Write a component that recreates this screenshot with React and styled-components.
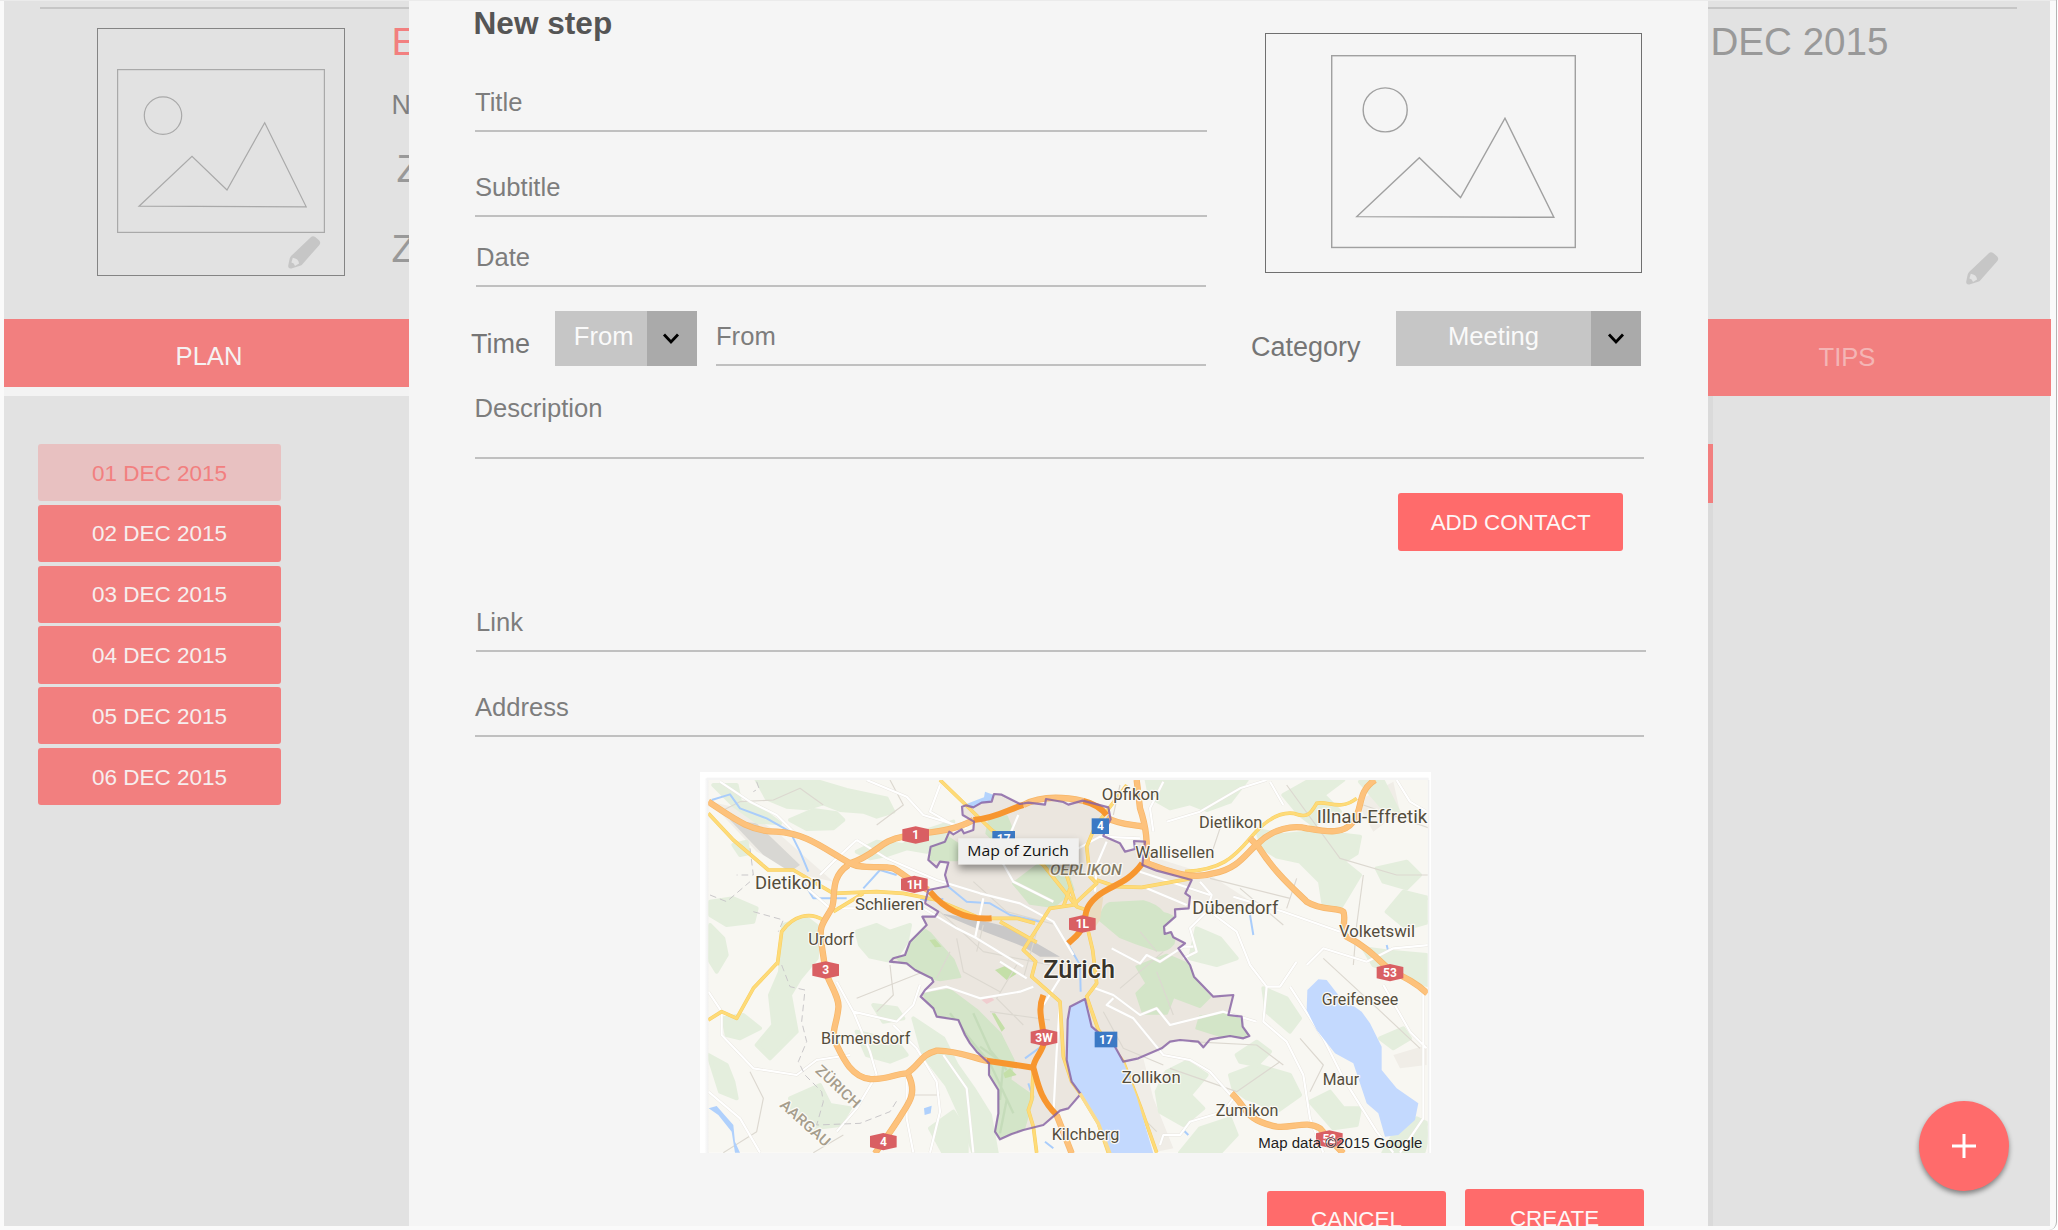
import React from "react";
import styled, { createGlobalStyle, css } from "styled-components";

const coral = "#ff6b6b";
const coralMuted = "#f27f7f";
const shade = "#e2e2e2";

const GlobalStyle = createGlobalStyle`
  *, *::before, *::after { box-sizing: border-box; }
  body {
    margin: 0;
    background: #ffffff;
    font-family: "Liberation Sans", Arial, Helvetica, sans-serif;
  }
`;

const Window = styled.div`
  position: relative;
  width: 2057px;
  height: 1230px;
  padding: 1px 0 4px 4px;
  overflow: hidden;
  background: #fafafa;
  border-right: 1px solid #b4b4b4;
  border-bottom-right-radius: 8px;
  box-shadow: inset 0 1px 0 #ebebeb;
`;

const Columns = styled.div`
  display: flex;
  height: 1225px;
  overflow: hidden;
`;

const Side = styled.div`
  display: flex;
  flex-direction: column;
  flex: none;
  width: ${(p) => p.$width}px;
  overflow: hidden;
`;

const Header = styled.header`
  flex: none;
  height: 318px;
  width: ${(p) => p.$width || "auto"};
  background: ${shade};
  overflow: hidden;
`;

const Rule = styled.div`
  height: 2px;
  margin: 6px ${(p) => p.$right || 0}px 0 ${(p) => p.$left || 0}px;
  background: #c6c6c6;
`;

const HeaderRow = styled.div`
  display: flex;
  align-items: flex-start;
  padding-left: 93px;
`;

const PictureBox = styled.div`
  position: relative;
  display: flex;
  flex: none;
  align-items: center;
  justify-content: center;
  width: ${(p) => p.$w}px;
  height: ${(p) => p.$h}px;
  margin: ${(p) => p.$margin};
  padding-bottom: 2px;
  border: 1.5px solid ${(p) => p.$color};
`;

const PencilBadge = styled.div`
  position: absolute;
  right: 23.5px;
  bottom: 6.5px;
  line-height: 0;
`;

const HeaderText = styled.div`
  width: 60px;
  margin-left: 46.5px;
  padding-top: 11px;
`;

const BigLine = styled.div`
  font-size: ${(p) => p.$size || 39}px;
  line-height: 44px;
  white-space: nowrap;
  margin-top: ${(p) => p.$top || 0}px;
  padding-left: ${(p) => p.$left || 0}px;
  color: ${(p) => p.$color || "#999999"};
`;

const SmallLine = styled.div`
  font-size: 26.8px;
  line-height: 30px;
  margin-top: 26px;
  color: #808080;
`;

const Tab = styled.div`
  flex: none;
  display: flex;
  align-items: center;
  justify-content: center;
  height: ${(p) => p.$height}px;
  padding: ${(p) => p.$pad};
  background: ${coralMuted};
  color: ${(p) => (p.$active ? "#f5f2f2" : "#f4b5b5")};
  font-size: 25.6px;
`;

const Strip = styled.div`
  flex: none;
  height: 9.5px;
  background: #f3f3f3;
`;

const Days = styled.nav`
  flex: 1;
  display: flex;
  flex-direction: column;
  gap: 3.5px;
  padding: 48px 0 0 34px;
  background: ${shade};
`;

const Day = styled.div`
  display: flex;
  flex: none;
  align-items: center;
  justify-content: center;
  width: 243px;
  height: 57.3px;
  padding-top: 2px;
  border-radius: 3px;
  font-size: 22.5px;
  background: ${(p) => (p.$current ? "#e8c1c1" : coralMuted)};
  color: ${(p) => (p.$current ? coralMuted : "#f6eeee")};
`;

const Dialog = styled.main`
  flex: none;
  width: 1299px;
  padding: 0 62px;
  background: #f5f5f5;
`;

const TopGrid = styled.div`
  display: grid;
  grid-template-columns: 736px 395px;
  column-gap: 44px;
`;

const DialogTitle = styled.h1`
  margin: 4px 0 0 2.5px;
  font-size: 31.6px;
  line-height: 36px;
  font-weight: 700;
  color: #555555;
`;

const Field = styled.div`
  margin: ${(p) => p.$top}px ${(p) => p.$right || 0}px 0 ${(p) => p.$left}px;
  padding-bottom: ${(p) => p.$room || 13}px;
  border-bottom: 2px solid #c0c0c0;
  font-size: 25.6px;
  line-height: 30px;
  color: #7d7d7d;
  text-indent: ${(p) => p.$indent || 0}px;
`;

const ControlRow = styled.div`
  display: flex;
  height: 55px;
  margin-top: ${(p) => p.$top}px;
`;

const ControlLabel = styled.div`
  width: ${(p) => p.$width}px;
  padding-top: ${(p) => p.$pad}px;
  font-size: 27px;
  line-height: 30px;
  color: #757575;
`;

const Select = styled.div`
  display: flex;
  flex: none;
  height: 55px;
`;

const SelectValue = styled.div`
  width: ${(p) => p.$width}px;
  padding: 10px 0 0 ${(p) => p.$left || 0}px;
  text-align: center;
  background: #c6c6c6;
  color: #fafafa;
  font-size: 25.6px;
  line-height: 30px;
`;

const SelectArrow = styled.div`
  display: flex;
  align-items: center;
  justify-content: center;
  width: 50px;
  padding-right: 1px;
  background: #aaaaaa;
`;

const InlineField = styled.div`
  flex: 1;
  margin: 0 1px 0 19.3px;
  padding-top: 10px;
  border-bottom: 2px solid #c0c0c0;
  font-size: 25.6px;
  line-height: 30px;
  color: #7d7d7d;
`;

const buttonText = css`
  font-size: 22.4px;
  color: #fdf6f6;
`;

const Button = styled.div`
  display: flex;
  flex: none;
  align-items: center;
  justify-content: center;
  width: ${(p) => p.$width}px;
  height: 58px;
  margin-top: ${(p) => p.$top || 0}px;
  padding-top: ${(p) => p.$pad || 0}px;
  border-radius: 3px;
  background: ${coral};
  ${buttonText}
`;

const ButtonRow = styled.div`
  display: flex;
  justify-content: flex-end;
  gap: ${(p) => p.$gap || 0}px;
  padding: ${(p) => p.$top}px ${(p) => p.$right}px 0 0;
`;

const MapFrame = styled.figure`
  width: 731px;
  height: 380.5px;
  margin: 35px 0 0 229px;
  background: #ffffff;
  svg { display: block; }
`;

const RightBody = styled.div`
  flex: 1;
  width: 342px;
  padding-top: 48px;
  background: linear-gradient(90deg, #dadada 0 5px, ${shade} 5px);
`;

const Sliver = styled.div`
  width: 5px;
  height: 59px;
  background: ${coralMuted};
`;

const HeaderPencil = styled.div`
  display: flex;
  justify-content: flex-end;
  padding: 187.5px 51px 0 0;
`;

const Fab = styled.div`
  position: absolute;
  left: 1919px;
  top: 1101px;
  display: flex;
  align-items: center;
  justify-content: center;
  width: 90px;
  height: 90px;
  border-radius: 50%;
  background: ${coral};
  box-shadow: 0 3px 5px rgba(0, 0, 0, 0.42);
`;

const Pencil = () => (
  <svg width="33" height="33" viewBox="0 0 33 33">
    <path
      fillRule="evenodd"
      fill="#c6c6c6"
      d="M22.8 1.3Q24.9-.8 27.2 1L31 4.2Q33.2 6.4 31.4 8.9L14.4 28.2Q13.4 29.3 12 29.8L3.4 32.4Q0 33 .2 29.4L1.7 22.4Q2.1 21 3.1 19.9ZM4.8 21.8 3.4 26.4Q6.2 26.8 7 29.9L11.1 27.4Q10.4 22.6 4.8 21.8Z"
    />
  </svg>
);

const Placeholder = ({ width, color }) => (
  <svg width={width} height={(width * 164) / 208} viewBox="0 0 208 164" fill="none" stroke={color}>
    <g strokeWidth="1.2">
      <rect x=".6" y=".6" width="206.8" height="162.8" />
      <circle cx="46" cy="46.6" r="18.7" />
      <path d="M22 137.2 75 87.3 110 121 147.7 53.7 189.2 137.8Z" />
    </g>
  </svg>
);

const Chevron = () => (
  <svg width="18" height="14" viewBox="0 0 18 14" fill="none" stroke="#000" strokeWidth="2.8">
    <path d="M2 2.5 9 10 16 2.5" />
  </svg>
);

const Dropdown = ({ value, width, left }) => (
  <Select>
    <SelectValue $width={width} $left={left}>{value}</SelectValue>
    <SelectArrow><Chevron /></SelectArrow>
  </Select>
);

const towns = [
  ["Opfikon", 1235, 105, 173, 51],
  ["Dietlikon", 1527, 190, 190, 48],
  ["Illnau-Effretik", 1880, 174, 332, 53],
  ["Wallisellen", 1336, 278, 237, 50],
  ["Dübendorf", 1507, 447, 258, 54],
  ["Volketswil", 1947, 515, 228, 49],
  ["Dietikon", 195, 373, 200, 53],
  ["Schlieren", 495, 434, 207, 50],
  ["Urdorf", 355, 539, 137, 49],
  ["Birmensdorf", 393, 837, 268, 50],
  ["Greifensee", 1895, 721, 230, 50],
  ["Maur", 1898, 959, 109, 50],
  ["Zollikon", 1295, 953, 177, 50],
  ["Zumikon", 1577, 1053, 188, 49],
  ["Kilchberg", 1085, 1125, 203, 49],
];

const shields = [
  ["1", 677, 210], ["1H", 673, 358], ["1L", 1177, 477], ["3", 407, 615],
  ["3W", 1062, 817], ["4", 580, 1130], ["53", 2100, 623], ["52", 1918, 1122],
];

const routes = [["4", 1205, 160, 52], ["17", 907, 198, 68], ["17", 1214, 800, 68]];

const greenAreas = [
  "M200 45 370 45 470 75 590 100 610 140 560 155 520 140 450 135 400 115 350 130 290 125 230 100Z",
  "M300 165 370 135 440 145 460 165 430 190 350 192Z",
  "M70 60 140 60 150 110 210 130 270 175 200 170 130 120Z",
  "M500 260 560 230 640 240 700 200 790 170 760 230 710 260 650 250 590 270 540 280Z",
  "M60 410 130 400 200 430 190 470 110 480 60 450Z M130 240 170 230 175 265 150 270Z",
  "M280 480 350 460 390 490 380 580 330 640 300 690 320 800 240 880 200 840 250 780 240 690 270 620Z",
  "M500 500 560 480 600 500 660 480 650 530 610 590 540 575 510 540Z",
  "M60 480 100 520 110 570 80 620 55 580Z M100 760 160 750 210 790 150 820 110 810Z",
  "M55 870 110 900 130 950 140 1000 90 980Z M300 1000 390 960 420 1020 480 1030 450 1080 370 1090 310 1050Z",
  "M550 720 620 730 640 760 580 770Z M500 800 620 830 650 870 600 890 530 870Z",
  "M670 760 760 820 800 900 850 970 900 1050 920 1163 850 1163 820 1070 770 960 700 870Z",
  "M1370 45 1670 45 1620 110 1550 135 1500 115 1440 130 1380 95Z",
  "M1700 195 1780 210 1880 200 2010 215 2000 265 1960 290 2010 330 1980 380 1950 430 1900 415 1890 350 1830 290 1760 275 1720 250Z",
  "M1780 90 1860 45 1960 45 1900 90 1950 140 1870 180 1830 150Z M2010 50 2080 50 2130 150 2080 130Z",
  "M2060 310 2150 290 2190 330 2150 370 2080 350Z M2090 440 2140 380 2220 400 2220 470 2150 490Z",
  "M1520 490 1590 520 1640 580 1580 600 1500 580Z M2020 550 2100 560 2210 570 2210 660 2160 640 2050 600Z",
  "M1720 670 1790 700 1830 760 1800 800 1730 740Z M1640 870 1700 830 1740 860 1700 900 1650 890Z",
  "M1430 920 1490 890 1550 930 1500 990 1540 1030 1480 1080 1410 1040 1400 980Z",
  "M1620 930 1700 900 1800 930 1830 990 1760 1040 1700 1010 1670 1000 1630 970Z",
  "M1530 1090 1620 1060 1640 1110 1590 1163 1470 1163Z M1860 1010 1920 980 1960 1030 2010 1030 2000 1080 1930 1090Z",
  "M2070 820 2140 790 2160 820 2110 850Z M2110 1110 2180 1060 2223 1080 2200 1163 2080 1163Z",
  "M720 1090 790 1040 830 1100 830 1163 760 1163Z",
];

const cityGreens = [
  "M630 420 Q640 375 660 370 L760 365 Q800 375 820 400 Q865 410 860 440 L850 490 Q830 515 800 510 L740 490 690 470Z",
  "M370 310 450 250 530 270 550 330 490 380 420 370Z",
  "M20 530 75 430 120 460 190 540 210 590 150 600 100 590 50 570Z",
  "M100 640 180 630 260 690 330 760 370 840 360 900 430 950 400 1050 330 1070 315 1050 325 930 297 870 240 790 205 725 140 710Z",
  "M740 560 830 525 900 555 930 620 960 650 930 680 850 650 830 700 760 700 740 640 770 610Z",
  "M930 710 1020 700 1055 715 1078 768 1000 770 920 745Z",
  "M120 200 170 170 215 200 200 240 150 240 115 240Z",
  "M300 110 350 110 370 160 330 200 290 160Z",
];

const highways = [
  "M55 110C130 160 180 200 260 200 350 205 400 250 480 295",
  "M480 295C560 270 570 225 640 215 700 200 780 205 850 165",
  "M1000 120C1050 93 1110 93 1180 108M1250 158C1290 180 1330 178 1360 185",
  "M1340 45 1350 130C1370 190 1372 230 1370 290",
  "M1360 290C1450 325 1510 345 1570 325 1650 310 1670 260 1705 235 1750 190 1810 180 1850 190 1910 200 1960 210 1990 170 2020 130 2000 80 2055 45",
  "M1680 220 1705 245C1760 330 1810 370 1850 410 1900 440 1940 425 1960 440 1970 460 1950 500 1970 515 2030 545 2060 580 2100 615 2150 640 2180 655 2212 685",
  "M475 300C415 340 440 400 425 430 400 475 385 480 395 540L407 620C420 660 450 700 445 730 440 780 425 790 435 830 455 870 480 935 540 942 590 945 620 925 650 925 690 900 690 870 740 857 790 855 840 875 890 887",
  "M655 930C680 980 660 1010 640 1040 610 1090 580 1130 555 1165",
  "M480 295C520 315 570 300 610 310 640 325 660 350 715 375",
  "M1100 1050 1145 1165",
  "M1625 985C1670 1025 1660 1065 1760 1085 1810 1090 1850 1065 1890 1090 1920 1125 1940 1145 1960 1165",
];

const cityHighways = [
  "M850 165C920 160 960 130 1000 120", "M1180 108C1210 115 1230 125 1250 150",
  "M720 380C770 440 830 465 905 460", "M1060 690C1040 740 1060 770 1062 830 1060 860 1030 880 1030 908 1045 960 1050 1000 1100 1050",
  "M890 887 1030 908", "M1357 295C1310 360 1260 360 1220 395 1180 430 1190 450 1180 480 1170 510 1150 520 1135 535",
];

const yellowRoads = [
  "M55 145 130 225 235 315 310 315 430 385 560 380 640 385 740 405 860 455M430 440 520 385",
  "M262 600 275 500C310 450 360 440 400 465M55 765 95 740 140 760 190 670 265 590",
  "M750 45 905 195 1060 300 1160 425 1190 435M1310 60 1215 185 1190 245 1200 335 1220 355 1150 420 1080 430 1000 555 1037 590 1025 635 1110 710 1120 875 1145 950 1172 987 1225 1075 1255 1163",
  "M905 460 980 460 1035 475M930 470 1040 532M1220 345 1280 365 1355 367 1505 340M1120 300 1160 425M1120 425 1140 370",
  "M1195 500 1208 555 1220 655 1190 695 1225 795 1300 890 1355 1035 1400 1163M1030 910 1025 1005 1015 1035 1030 1085 1040 1163",
  "M1485 320C1590 315 1630 280 1680 220 1730 160 1770 140 1810 145 1850 160 1860 150 1880 115 1910 105 1950 140 2000 100",
];

const whiteRoads = [
  "M90 50 180 110 260 150 320 210 450 270M530 45 650 95 700 150 830 190M750 60 720 140 790 180M500 225 590 280 740 345 870 385 990 415 1090 470 1150 570",
  "M390 330 430 290 500 225M340 360 420 430 560 430 700 430 800 490 860 520 1000 605M880 400 855 520M985 150 930 280 970 350 1090 410",
  "M55 680 95 740 95 810 190 910 320 930 380 885 480 870M440 650 490 740 620 770 670 720 690 660M490 740 540 860 560 930 500 1030 440 1100M610 780 680 850 740 950 750 1040 720 1163",
  "M650 940 650 1060 670 1163M760 870 830 970 850 1163M55 980 150 1060 210 1163",
  "M700 680 770 665 870 700 990 680 1030 665M1110 640 1060 720M1110 710 1100 860 1090 1050M930 590 1010 640",
  "M1110 280 1230 215 1350 220M1250 230 1220 300 1215 380M1350 320 1560 390M1420 50 1380 130 1390 200M1430 170 1530 140 1650 70 1730 45",
  "M1530 350 1565 390 1550 440 1500 490 1520 560 1480 580M1370 370 1490 420M1630 395 1780 440 1950 500M1560 440 1640 500 1680 600 1730 665 1770 665 1820 590M1800 665 1900 820 1960 940 2060 1100 2110 1163",
  "M1730 665 1720 770 1790 830 1840 930 1860 1060 1900 1163M1265 550 1350 595 1370 570 1410 590 1480 545 1510 545M1215 670 1270 690 1350 750 1400 730 1440 780 1600 740 1700 770",
  "M1270 700 1250 720 1330 760 1420 870 1500 885 1560 920 1630 1000 1600 1040 1500 1070 1470 1110 1420 1110 1410 1140",
  "M1850 600 1900 550 2030 590 2110 550 2220 540M2080 660 2160 800 2210 850M2200 680 2200 1060 2130 1163M2120 45 2160 110 2210 140M1740 50 1780 120",
];

const thinRoads = [
  "M90 140 150 110 250 105 330 70 400 120M600 45 640 120 560 180M830 240 1080 280M750 440 880 560 1080 600M800 520 820 620 930 680M850 350 950 440 1100 480",
  "M500 700 600 660 700 620M180 920 220 1000 200 1100 100 1163M370 1163 460 1110M900 740 1080 765M980 600 920 700 1000 780M1290 670 1420 560M1240 740 1300 850 1420 900",
  "M1790 60 1950 280 2120 330 2220 330M2020 330 2000 480 1990 600M1650 370 1780 480M1560 340 1800 400M1900 580 2030 700 2190 850M1500 830 1700 840 1780 900",
  "M1300 1000 1400 1100M1440 910 1640 980 1770 890M2020 120 2220 190M1830 820 1900 900 1860 980M1350 500 1400 560M1290 60 1270 150",
  "M650 990 750 990M780 560 740 640M880 480 860 560M1040 500 1000 640M1400 620 1450 750M1600 160 1560 280M1820 340 1790 430M600 600 610 690 560 740",
];

const borderPath =
  "M216 80 228 76 250 82 275 68 305 65 312 42 335 44 390 72 415 68 465 74 468 57 520 66 535 74 578 62 655 82 662 118 650 140 640 168 690 190 705 215 735 207 732 183 765 185 757 255 800 272 905 300 886 340 900 350 896 385 855 388 856 410 822 440 824 462 843 456 850 472 885 490 865 505 900 555 912 590 970 650 1030 645 1015 705 1055 710 1058 740 1078 768 1060 775 1020 768 960 778 940 802 925 785 870 780 840 785 815 805 745 835 700 845 675 800 605 740 585 657 540 680 533 720 530 840 545 905 572 942 535 985 510 992 460 1035 400 1050 365 1062 330 1078 315 1055 325 1000 325 930 297 885 297 850 260 815 240 790 225 765 205 720 140 710 130 685 92 650 105 630 130 605 125 595 75 570 50 550 0 545 10 535 45 525 60 485 110 435 97 410 135 410 145 395 105 370 115 330 175 318 165 285 175 248 150 245 140 262 115 240 122 200 165 185 178 155 190 163 215 148 222 160 250 150 252 125 218 105Z";

const lakePath = "M540 680 585 657 605 740 675 800 700 845 740 950 790 1120 655 1120 625 1030 572 942 545 905 530 840 533 720Z";

const strokes = (list, stroke, width, key) => (
  <g key={key} stroke={stroke} strokeWidth={width} fill="none" strokeLinejoin="round" strokeLinecap="butt">
    {list.map((d) => <path key={d} d={d} />)}
  </g>
);

const ZurichMap = () => (
  <svg width="731" height="380.5" viewBox="30 21 2193 1141.5" fontFamily="Roboto, sans-serif">
    <defs>
      <clipPath id="land"><rect x="55" y="45" width="2158" height="1119" /></clipPath>
      <clipPath id="city"><path d={borderPath} /></clipPath>
      <linearGradient id="edge" x1="0" x2="1"><stop offset="0" stopColor="#fff" /><stop offset="1" stopColor="#ededed" /></linearGradient>
      <filter id="tipShadow" x="-20%" y="-40%" width="140%" height="220%">
        <feDropShadow dx="0" dy="14" stdDeviation="12" floodOpacity=".42" />
      </filter>
    </defs>
    <rect x="30" y="21" width="2193" height="1142" fill="#fff" />
    <rect x="43" y="40" width="14" height="1124" fill="url(#edge)" />
    <rect x="50" y="38" width="2166" height="8" fill="#f4f4f4" />
    <rect x="2212" y="45" width="6" height="1120" fill="#f0f0f0" />
    <g clipPath="url(#land)">
      <rect x="30" y="21" width="2193" height="1142" fill="#f8f7f2" />
      <g fill="#f0ede7">
        <path d="M60 110 150 130 260 200 430 350 340 330 200 260Z" />
        <path d="M1370 270 1560 330 1700 420 1620 450 1500 400ZM2000 110 2110 50 2130 140 2050 200Z" />
        <path d="M1290 890 1360 880 1390 1000 1450 1150 1400 1160ZM2110 870 2210 840 2210 900 2130 910Z" />
      </g>
      <path d="M120 165 200 175 330 300 300 320 220 270Z" fill="#d8d7d3" />
      <g fill="#e4eedd" stroke="#e4eedd" strokeWidth="12" strokeLinejoin="round">{greenAreas.map((d) => <path key={d} d={d} />)}</g>
      <g transform="translate(600 45)">
        <path d={borderPath} fill="#ebe6df" />
        <g clipPath="url(#city)">
          <g fill="#d3e5c8" stroke="#d3e5c8" strokeWidth="8" strokeLinejoin="round">{cityGreens.map((d) => <path key={d} d={d} />)}</g>
          <path d="M150 400 270 420 350 440 440 490 510 530 450 530 400 500 270 450Z" fill="#c9c8c8" />
          <path d="M580 400 620 350 640 350 630 420 610 450 590 440Z" fill="#eadcc0" />
          <g stroke="#bcd5b0" strokeWidth="7" fill="none" opacity=".6">
            <path d="M180 700 250 790 300 850 370 1000M250 700 300 810 350 870M270 800 340 850 330 960M350 960 330 1060" />
          </g>
          <path d="M315 570 345 558 383 580 350 600ZM305 700 315 700 345 745 335 755ZM118 480 135 478 155 500 135 502ZM340 880 360 865 380 885 345 895Z" fill="#c4dfa8" />
          <path d="M275 660 300 648 313 660 290 672Z" fill="#f0cdcf" />
        </g>
        <path d="M220 76 260 60 282 52 285 35 312 45 300 66 275 68 250 84Z" fill="#b4d3fd" />
      </g>
      {strokes(thinRoads, "#dcd8d0", 3.5, "thin")}
      {strokes(["M65 105 120 88 150 130 230 160 300 200 330 260 355 320M520 370 570 315 620 330M340 350 370 400 470 400M690 405 760 402M775 365 830 410 900 415 960 450 1050 470M1130 530 1170 600 1172 680M1680 450 1690 510", "M1005 880 1060 840M1015 955 1025 985M1065 1130 1090 1150M2090 540 2095 560M1480 1095 1495 1110"], "#a9cdfb", 6, "streams")}
      <path d="M56 1030 80 1023 130 1080 135 1130 150 1163 135 1163 125 1100 85 1050ZM702 1030 725 1022 722 1045 704 1050Z" fill="#afd0fc" />
      {strokes(whiteRoads, "#e8e5df", 9, "casing")}
      {strokes(whiteRoads, "#ffffff", 6.5, "white")}
      <g stroke="#c9c7c9" strokeWidth="3" fill="none" strokeDasharray="20 12">
        <path d="M200 50 207 70 190 80M60 390 110 410 180 350M180 250 190 330 140 330M190 440 280 465 265 500M275 600 300 665 345 675 335 770 350 830 325 890 345 930 395 980 400 1010 380 1080 510 1075 600 1040 625 1000" />
      </g>
      {strokes(yellowRoads, "#f8ce62", 11, "yc")}
      {strokes(yellowRoads, "#fedb78", 8, "y")}
      {strokes(highways, "#f6b669", 19, "hc")}
      {strokes(highways, "#fdc27c", 15, "h")}
      {strokes(cityHighways, "#f7962f", 18, "ch")}
      <path transform="translate(600 45)" d={lakePath} fill="#c3d9fe" />
      <path d="M1852 675 1885 643 1910 645 1945 690 2015 740 2040 775 2075 845 2075 915 2120 970 2185 1015 2175 1065 2125 1110 2085 1115 2065 1045 2030 1015 1990 895 1935 865 1880 795 1850 735Z" fill="#c3d9fe" />
      <path transform="translate(600 45)" d={borderPath} fill="none" stroke="#8661a3" strokeOpacity=".82" strokeWidth="6.5" strokeLinejoin="round" />
      <path d="M1170 985 1225 1075 1260 1165" fill="none" stroke="#fbdc8d" strokeWidth="10" />
    </g>
    {shields.map(([label, x, y]) => (
      <g key={label} transform={`translate(${x} ${y})`}>
        <path d="M-40-17 0-26 40-17V17L0 26-40 17Z" fill="#d95f63" />
        <text y="13" textAnchor="middle" fontSize="36" fontWeight="700" fill="#fff">{label}</text>
      </g>
    ))}
    {routes.map(([label, x, y, w]) => (
      <g key={`${label}-${y}`} transform={`translate(${x} ${y})`}>
        <rect width={w} height="47" fill="#3b79c5" />
        <text x={w / 2} y="36" textAnchor="middle" fontSize="36" fontWeight="700" fill="#fff">{label}</text>
      </g>
    ))}
    <g fill="#544d3d" stroke="#fbfaf6" strokeWidth="7" strokeLinejoin="round" paintOrder="stroke">
      {towns.map(([name, x, y, len, size]) => (
        <text key={name} x={x} y={y} fontSize={size} textLength={len} lengthAdjust="spacingAndGlyphs">{name}</text>
      ))}
      <text x="1060" y="638" fontSize="77" fontWeight="500" fill="#38342b" textLength="215" lengthAdjust="spacingAndGlyphs">Zürich</text>
      <text x="1080" y="331" fontSize="44" fontStyle="italic" fontWeight="500" fill="#857c66" textLength="215" lengthAdjust="spacingAndGlyphs">OERLIKON</text>
      <g fill="#a69d8c" fontSize="44" fontWeight="500" textAnchor="middle">
        <text transform="translate(434 976) rotate(43)" textLength="165" lengthAdjust="spacingAndGlyphs">ZÜRICH</text>
        <text transform="translate(336 1085) rotate(42)" textLength="185" lengthAdjust="spacingAndGlyphs">AARGAU</text>
      </g>
    </g>
    <text x="1705" y="1148" fontFamily="Liberation Sans, Arial, sans-serif" fontSize="46" fill="#222" stroke="#fff" strokeOpacity=".5" strokeWidth="4" paintOrder="stroke" textLength="492" lengthAdjust="spacingAndGlyphs">Map data ©2015 Google</text>
    <rect x="805" y="220" width="361" height="78" fill="#f0f0ef" filter="url(#tipShadow)" />
    <text x="832" y="273" fontFamily="Open Sans, sans-serif" fontSize="44" fill="#111" textLength="305" lengthAdjust="spacingAndGlyphs">Map of Zurich</text>
  </svg>
);

const days = ["01", "02", "03", "04", "05", "06"];

export default function App() {
  return (
    <>
      <GlobalStyle />
      <Window>
        <Columns>
          <Side $width={405}>
            <Header>
              <Rule $left={36} />
              <HeaderRow>
                <PictureBox $w={248} $h={248} $margin="19px 0 0" $color="#848484">
                  <Placeholder width={208} color="#a9a9a9" />
                  <PencilBadge><Pencil /></PencilBadge>
                </PictureBox>
                <HeaderText>
                  <BigLine $color={coralMuted}>E</BigLine>
                  <SmallLine>N</SmallLine>
                  <BigLine $top={26.5} $left={5}>Z</BigLine>
                  <BigLine $top={36}>Z</BigLine>
                </HeaderText>
              </HeaderRow>
            </Header>
            <Tab $height={67.5} $pad="8px 0 0 5px" $active>PLAN</Tab>
            <Strip />
            <Days>
              {days.map((day, i) => (
                <Day key={day} $current={i === 0}>{day} DEC 2015</Day>
              ))}
            </Days>
          </Side>

          <Dialog>
            <TopGrid>
              <div>
                <DialogTitle>New step</DialogTitle>
                <Field $top={46} $left={4}>Title</Field>
                <Field $top={40} $left={4}>Subtitle</Field>
                <Field $top={25} $left={5} $right={1}>Date</Field>
                <ControlRow $top={24}>
                  <ControlLabel $width={83.7} $pad={18}>Time</ControlLabel>
                  <Dropdown value="From" width={92} left={6} />
                  <InlineField>From</InlineField>
                </ControlRow>
              </div>
              <div>
                <PictureBox $w={377} $h={240} $margin="32px 0 0 14px" $color="#6f6f6f">
                  <Placeholder width={245} color="#a0a0a0" />
                </PictureBox>
                <ControlRow $top={38}>
                  <ControlLabel $width={144.9} $pad={21}>Category</ControlLabel>
                  <Dropdown value="Meeting" width={195.3} />
                </ControlRow>
              </div>
            </TopGrid>
            <Field $top={27} $left={4} $right={2} $room={34} $indent={-0.5}>Description</Field>
            <ButtonRow $top={34} $right={22.6}>
              <Button $width={225.5} $pad={2}>ADD CONTACT</Button>
            </ButtonRow>
            <Field $top={56} $left={5}>Link</Field>
            <Field $top={40} $left={4} $right={2}>Address</Field>
            <MapFrame><ZurichMap /></MapFrame>
            <ButtonRow $top={36.5} $right={2} $gap={19}>
              <Button $width={179} $top={2}>CANCEL</Button>
              <Button $width={179} $pad={2}>CREATE</Button>
            </ButtonRow>
          </Dialog>

          <Side $width={343}>
            <Header $width="342px">
              <Rule $right={33} />
              <BigLine $top={11} $left={2.5} $size={38.6}>DEC 2015</BigLine>
              <HeaderPencil><Pencil /></HeaderPencil>
            </Header>
            <Tab $height={77} $pad="0 65px 0 0">TIPS</Tab>
            <RightBody><Sliver /></RightBody>
          </Side>
        </Columns>
        <Fab>
          <svg width="26" height="26" viewBox="0 0 26 26" stroke="#fff" strokeWidth="3">
            <path d="M13 1V25M1 13H25" />
          </svg>
        </Fab>
      </Window>
    </>
  );
}
